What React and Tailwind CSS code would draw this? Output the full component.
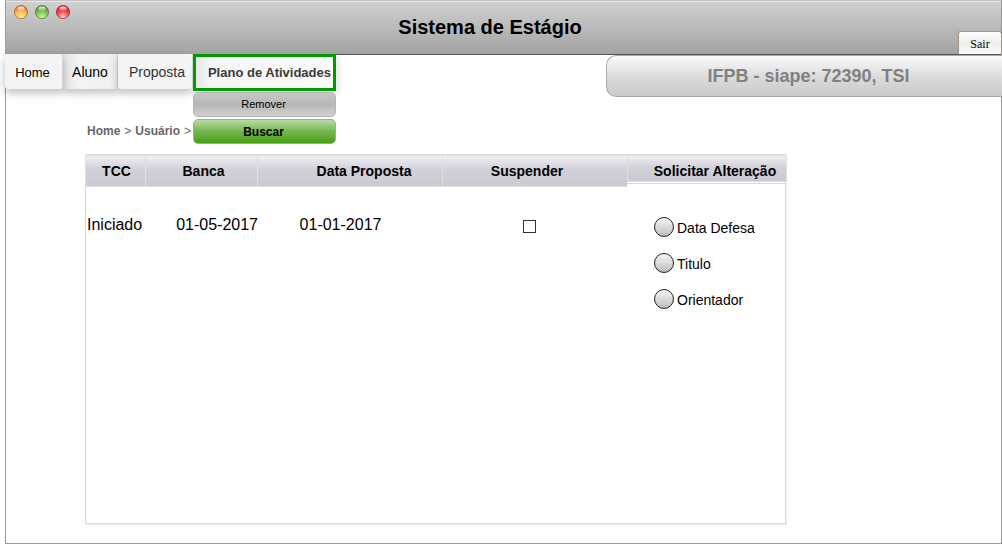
import React from "react";

function Light({ id, dark, mid, glow, edge }) {
  return (
    <svg className="size-[14px]" viewBox="0 0 14 14" aria-hidden="true">
      <defs>
        <radialGradient id={id} cx="50%" cy="90%" r="85%">
          <stop offset="0" stopColor={glow} />
          <stop offset="0.55" stopColor={mid} />
          <stop offset="1" stopColor={dark} />
        </radialGradient>
        <linearGradient id={`${id}-shine`} x1="0" y1="0" x2="0" y2="1">
          <stop offset="0" stopColor="#fff" stopOpacity="0.9" />
          <stop offset="1" stopColor="#fff" stopOpacity="0.15" />
        </linearGradient>
      </defs>
      <circle cx="7" cy="7" r="6.6" fill={`url(#${id})`} stroke={edge} strokeWidth="0.7" />
      <ellipse cx="7" cy="3.6" rx="3.6" ry="2.2" fill={`url(#${id}-shine)`} />
    </svg>
  );
}

function Header() {
  return (
    <header className="flex h-[55px] border-b border-[#555] bg-linear-to-b from-[#d2d2d2] to-[#a3a3a3] shadow-[inset_0_1px_0_#c4c4c4,inset_0_2px_0_#e6e6e6]">
      <div className="flex gap-[7px] pt-[5px] pl-2">
        <Light id="amber" dark="#c9702c" mid="#f6b958" glow="#fff08a" edge="#a8602c" />
        <Light id="green" dark="#4b8a34" mid="#86c158" glow="#d4f59a" edge="#4c7a38" />
        <Light id="red" dark="#c0202a" mid="#f04c52" glow="#ffcccc" edge="#98262a" />
      </div>
      <h1 className="flex-1 pr-12 text-center text-[20px] leading-[54px] font-bold text-black">
        Sistema de Estágio
      </h1>
      <button
        type="button"
        className="z-10 -mr-px h-[23px] w-11 self-end rounded-t-[3px] border border-b-0 border-[#a8947c] bg-linear-to-b from-white via-[#eee] to-[#fafafa] pt-0.5 font-['Liberation_Serif',serif] text-[12px] text-black"
      >
        Sair
      </button>
    </header>
  );
}

const tab =
  "flex h-[35px] items-center justify-center rounded-b-[3px] border-r border-[#d4d4d4] pt-0.5 text-[14px] shadow-[0_4px_8px_rgba(0,0,0,0.25)]";

function Nav() {
  return (
    <nav className="relative z-10 -ml-px flex items-start">
      <a href="#home" className={`${tab} relative z-10 w-[58px] bg-[#f4f4f4] text-black`}>
        <span className="pr-0.5 text-[13px]">Home</span>
      </a>
      <a
        href="#aluno"
        className={`${tab} w-[55px] bg-linear-to-r from-[#e4e4e4] via-[#f4f4f4] via-30% to-[#f0f0f0] text-black`}
      >
        Aluno
      </a>
      <a href="#proposta" className={`${tab} relative z-10 w-[75px] bg-[#f4f4f4] pl-1 text-[#333]`}>
        Proposta
      </a>
      <div className="relative z-20">
        <a
          href="#plano"
          className="flex h-[37px] w-[143px] items-center justify-end border-3 border-[#009a00] bg-linear-to-r from-[#e6e6e6] via-[#f6f6f6] via-10% to-[#fafafa] pr-0.5 text-[13px] font-bold whitespace-nowrap text-[#3a3a3a] shadow-[3px_3px_6px_rgba(0,0,0,0.1)]"
        >
          Plano de Atividades
        </a>
        <div className="absolute top-full left-0 mt-px flex w-[143px] flex-col gap-0.5">
          <button
            type="button"
            className="h-[25px] rounded-[5px] border border-[#b4b4b4] bg-linear-to-b from-[#c8c8c8] via-[#b6b6b6] to-[#d2d2d2] pr-0.5 text-[11px] text-black"
          >
            Remover
          </button>
          <button
            type="button"
            className="h-[25px] rounded-[5px] border border-[#a5a5a5] bg-linear-to-b from-[#b9dba6] via-[#74b64c] to-[#43a008] pr-0.5 text-[12px] font-bold text-black"
          >
            Buscar
          </button>
        </div>
      </div>
    </nav>
  );
}

const th =
  "h-[33px] border-t-2 border-r border-b border-[#dedee4] bg-linear-to-b from-[#efeff4] via-[#d2d1d8] via-45% to-[#cbcad2] p-0 text-center";

function Radio({ label }) {
  return (
    <label className="flex h-9 items-center gap-[3px] text-[14px] text-black">
      <input
        type="radio"
        name="alteracao"
        className="size-5 shrink-0 appearance-none rounded-full border border-[#222] bg-linear-to-b from-[#f8f8f8] to-[#bcbcbc] checked:border-4"
      />
      <span className="pt-0.5">{label}</span>
    </label>
  );
}

function Records() {
  return (
    <section className="mt-[13px] mr-[215px] mb-[19px] ml-[79px] flex-1 border-r border-b border-l border-[#d8d8d8] shadow-[1px_1px_0_#eee]">
      <table className="-mx-px w-[calc(100%+2px)] table-fixed border-separate border-spacing-0 text-black">
        <thead className="text-[14px] font-bold">
          <tr>
            <th scope="col" className={`${th} w-[61px] border-l pl-0.5`}>TCC</th>
            <th scope="col" className={`${th} w-28 pl-1`}>Banca</th>
            <th scope="col" className={`${th} w-[185px] pl-7`}>Data Proposta</th>
            <th scope="col" className={`${th} w-[184px] border-r-0 pr-4`}>Suspender</th>
            <th scope="col" className="h-[33px] bg-white p-0 align-top">
              <div className="-mr-px h-7 border border-t-2 border-[#dedee4] bg-linear-to-b from-[#efeff4] via-[#d2d1d8] via-45% to-[#cbcad2] pl-4 leading-[30px] whitespace-nowrap">
                Solicitar Alteração
              </div>
              <div className="mt-px h-1 border-t border-r border-[#d8d8d8]" />
            </th>
          </tr>
        </thead>
        <tbody className="text-[16px] leading-6">
          <tr className="align-top">
            <td className="pt-[26px] pl-0.5">Iniciado</td>
            <td className="pt-[26px] text-right">01-05-2017</td>
            <td className="pt-[26px] pr-5 text-center">01-01-2017</td>
            <td className="pt-[33px] pr-3">
              <input
                type="checkbox"
                aria-label="Suspender"
                className="mx-auto block size-[13px] appearance-none border border-[#333] bg-white checked:bg-[#333]"
              />
            </td>
            <td className="pt-[22px] pl-[27px]">
              <Radio label="Data Defesa" />
              <Radio label="Titulo" />
              <Radio label="Orientador" />
            </td>
          </tr>
        </tbody>
      </table>
    </section>
  );
}

export default function App() {
  return (
    <div className="flex min-h-screen flex-col bg-white pb-[7px] pl-[5px] font-['Liberation_Sans',Arial,sans-serif]">
      <main className="flex flex-1 flex-col border-r border-b border-l border-[#999]">
        <Header />
        <div className="-mt-px flex h-[43px] items-start justify-between">
          <Nav />
          <div className="mt-px -mr-px h-[42px] w-[396px] rounded-l-[10px] border border-r-0 border-[#aaa] bg-linear-to-b from-[#fbfbfb] via-[#dcdcdc] via-50% to-[#cacaca] pl-2 text-center text-[18px] leading-[40px] font-bold text-[#808080]">
            IFPB - siape: 72390, TSI
          </div>
        </div>
        <div className="mt-6 flex h-5 items-center gap-1 pl-[81px] text-[12px] font-bold text-[#666]">
          <a href="#home">Home</a>
          <span className="font-normal">&gt;</span>
          <a href="#usuario">Usuário</a>
          <span className="font-normal">&gt;</span>
        </div>
        <Records />
      </main>
    </div>
  );
}
